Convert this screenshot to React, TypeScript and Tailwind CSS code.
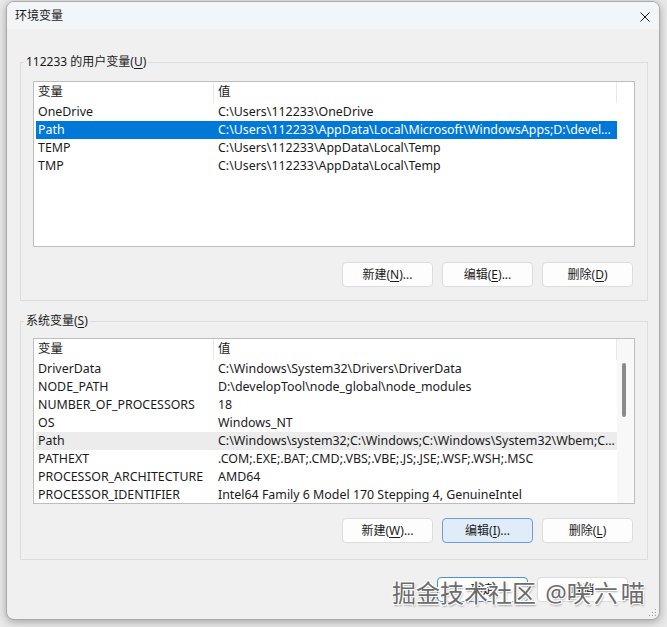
import React from "react";
import clsx from "clsx";

const font = "font-['Noto_Sans','Noto_Sans_CJK_SC',sans-serif]";

type Item = { name: string; value: string; selected?: boolean; hover?: boolean };

const userVars: Item[] = [
  { name: "OneDrive", value: "C:\\Users\\112233\\OneDrive" },
  {
    name: "Path",
    value: "C:\\Users\\112233\\AppData\\Local\\Microsoft\\WindowsApps;D:\\developTool\\nodejs;D:\\developTool\\node_global",
    selected: true,
  },
  { name: "TEMP", value: "C:\\Users\\112233\\AppData\\Local\\Temp" },
  { name: "TMP", value: "C:\\Users\\112233\\AppData\\Local\\Temp" },
];

const sysVars: Item[] = [
  { name: "DriverData", value: "C:\\Windows\\System32\\Drivers\\DriverData" },
  { name: "NODE_PATH", value: "D:\\developTool\\node_global\\node_modules" },
  { name: "NUMBER_OF_PROCESSORS", value: "18" },
  { name: "OS", value: "Windows_NT" },
  {
    name: "Path",
    value: "C:\\Windows\\system32;C:\\Windows;C:\\Windows\\System32\\Wbem;C:\\Windows\\System32\\WindowsPowerShell",
    hover: true,
  },
  { name: "PATHEXT", value: ".COM;.EXE;.BAT;.CMD;.VBS;.VBE;.JS;.JSE;.WSF;.WSH;.MSC" },
  { name: "PROCESSOR_ARCHITECTURE", value: "AMD64" },
  { name: "PROCESSOR_IDENTIFIER", value: "Intel64 Family 6 Model 170 Stepping 4, GenuineIntel" },
];

const Key = ({ k }: { k: string }) => <span className="underline underline-offset-2">{k}</span>;

function Button({ label, k, dots, focused, primary }: { label: string; k?: string; dots?: boolean; focused?: boolean; primary?: boolean }) {
  return (
    <button
      className={clsx(
        "w-[91px] h-[25px] rounded-[4px] border text-[12px] text-[#1a1a1a] flex items-center justify-center",
        focused ? "bg-[#e0ecf8] border-[#6d9fd6]" : primary ? "bg-[#fdfdfd] border-[#4a8fd6]" : "bg-[#fdfdfd] border-[#dcdcdc]"
      )}
    >
      {label}
      {k && (
        <>
          (<Key k={k} />)
        </>
      )}
      {dots && "..."}
    </button>
  );
}

function VarList({ items, scroll }: { items: Item[]; scroll?: boolean }) {
  return (
    <div className="w-[602px] h-[166px] border border-[#bdbdbd] bg-white flex overflow-hidden text-[12.4px]">
      <div className="ml-[2px] w-[581px] shrink-0">
        <div className="flex h-[21px] items-center border-r border-[#e8e8e8]">
          <div className="w-[178px] h-full pl-[2px] flex items-center border-r border-[#e8e8e8]">变量</div>
          <div className="pl-[4px]">值</div>
        </div>
        {items.map((it) => (
          <div
            key={it.name}
            className={clsx(
              "flex h-[18px] items-center",
              it.selected && "bg-[#0078d7] text-white",
              it.hover && "bg-[#ececec]"
            )}
          >
            <div className="w-[178px] shrink-0 pl-[2px] truncate">{it.name}</div>
            <div className="flex-1 min-w-0 pl-[4px] truncate">{it.value}</div>
          </div>
        ))}
      </div>
      {scroll && (
        <div className="flex-1 bg-[#f8f8f8]">
          <div className="ml-[5px] mt-[24px] w-[4px] h-[54px] rounded-full bg-[#8a8a8a]" />
        </div>
      )}
    </div>
  );
}

export default function App() {
  return (
    <div className={clsx("relative w-[667px] h-[627px] bg-[#e9e9e9] overflow-hidden pl-[6px] pt-[1px] text-[12px] text-[#1a1a1a]", font)}>
      <div className="relative w-[654px] h-[619px] rounded-[8px] border border-[#a9a9a9] bg-[#f0f0f0] overflow-hidden flex flex-col shadow-[0_2px_8px_rgba(0,0,0,0.3)]">
        {/* title bar */}
        <div className="h-[27px] shrink-0 flex items-center justify-between pl-[8px] pr-[9px] bg-[#f3f6f9]">
          <span>环境变量</span>
          <svg width="10" height="10" viewBox="0 0 10 10" className="mt-[2px]">
            <path d="M0.5 0.5L9.5 9.5M9.5 0.5L0.5 9.5" stroke="#1a1a1a" strokeWidth="1" />
          </svg>
        </div>

        <div className="flex-1 pl-[13px] pr-[11px] pt-[25px]">
          <fieldset className="border border-[#dddddd] w-[628px] pb-[13px]">
            <legend className="ml-[3px] px-[2px] leading-[16px]">
              112233 的用户变量(<Key k="U" />)
            </legend>
            <div className="ml-[12px] mt-[11px]">
              <VarList items={userVars} />
            </div>
            <div className="mt-[15px] flex justify-end gap-[9px] pr-[14px]">
              <Button label="新建" k="N" dots />
              <Button label="编辑" k="E" dots />
              <Button label="删除" k="D" />
            </div>
          </fieldset>

          <fieldset className="mt-[12px] border border-[#dddddd] w-[628px] pb-[16px]">
            <legend className="ml-[3px] px-[2px] leading-[16px]">
              系统变量(<Key k="S" />)
            </legend>
            <div className="ml-[12px] mt-[9px]">
              <VarList items={sysVars} scroll />
            </div>
            <div className="mt-[14px] flex justify-end gap-[9px] pr-[14px]">
              <Button label="新建" k="W" dots />
              <Button label="编辑" k="I" dots focused />
              <Button label="删除" k="L" />
            </div>
          </fieldset>

          <div className="mt-[17px] flex justify-end gap-[9px] pr-[20px]">
            <Button label="确定" primary />
            <Button label="取消" />
          </div>
        </div>

        <svg width="8" height="8" viewBox="0 0 8 8" className="absolute right-[2px] bottom-[2px]">
          <rect x="6" y="0" width="1" height="1" fill="#9a9a9a" />
          <rect x="3" y="3" width="1" height="1" fill="#9a9a9a" />
          <rect x="6" y="3" width="1" height="1" fill="#9a9a9a" />
          <rect x="0" y="6" width="1" height="1" fill="#9a9a9a" />
          <rect x="3" y="6" width="1" height="1" fill="#9a9a9a" />
          <rect x="6" y="6" width="1" height="1" fill="#9a9a9a" />
        </svg>
      </div>

      {/* watermark */}
      <div className="absolute left-[392px] top-[581px] text-[24px] leading-[24px] text-[#6c6c6c] whitespace-nowrap [text-shadow:1px_1px_0_#fff,-1px_-1px_0_#fff,1px_-1px_0_#fff,-1px_1px_0_#fff,1px_2px_2px_rgba(0,0,0,0.35)]">
        掘金技术社区 <span className="ml-[3px]">@</span>
        <span className="tracking-[3px]">咲六喵</span>
      </div>
    </div>
  );
}
